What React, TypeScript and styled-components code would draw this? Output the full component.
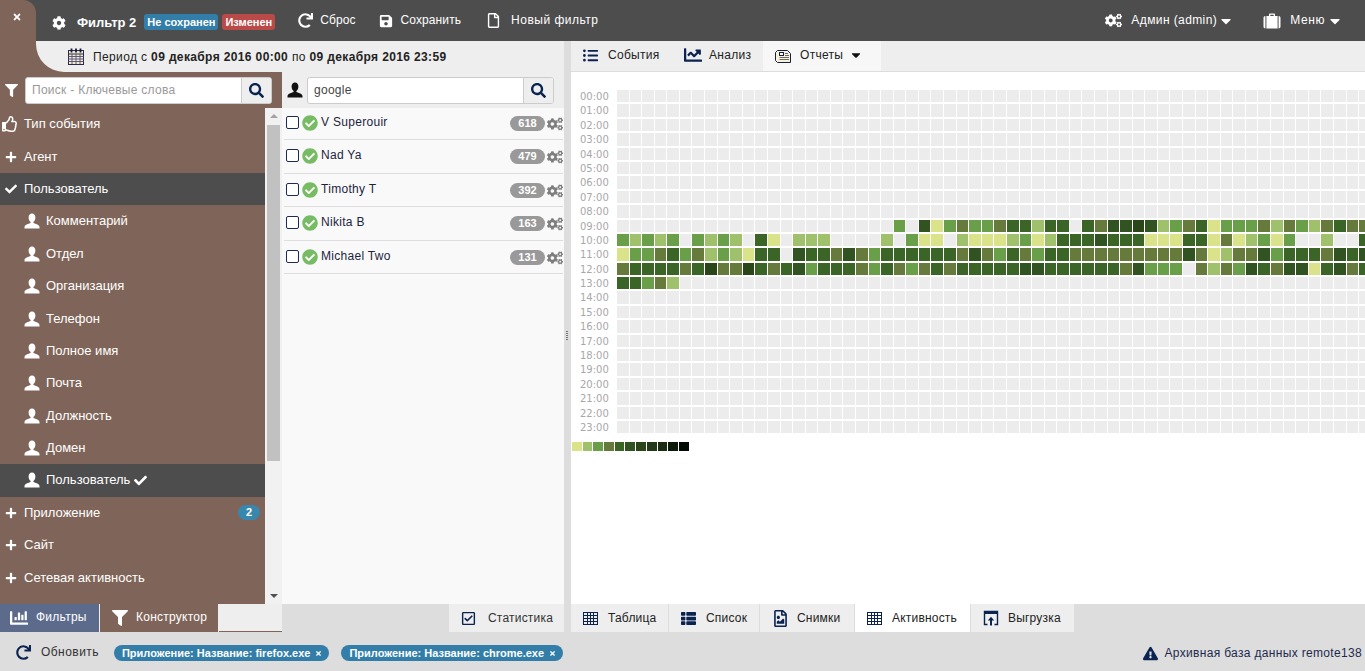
import React from 'react';
import styled, { createGlobalStyle } from 'styled-components';
import {
  FaCog, FaCogs, FaRedo, FaSave, FaRegFile, FaCaretDown, FaTimes, FaFilter, FaSearch,
  FaRegThumbsUp, FaPlus, FaCheck, FaCheckCircle, FaChartBar, FaRegCheckSquare, FaListUl, FaChartLine,
  FaThList, FaRegFileImage, FaExclamationTriangle,
} from 'react-icons/fa';

const BROWN = '#7f6559';
const DARK = '#4d4d4d';
const NAVY = '#0b2350';

const Global = createGlobalStyle`
  html, body { margin: 0; padding: 0; height: 100%; overflow: hidden; }
  body { font-family: "Liberation Sans", Arial, sans-serif; font-size: 12px; color: #333; background: #ddd; }
  * { box-sizing: border-box; }
`;

const Page = styled.div`
  width: 1365px; height: 671px; display: flex; flex-direction: column; overflow: hidden; background: #ddd;
`;

/* ---------- top bar ---------- */
const TopBar = styled.header`
  height: 41px; flex: none; background: ${DARK}; color: #fff; display: flex; align-items: center; padding-right: 22px;
`;
const CloseTab = styled.div`
  width: 36px; height: 41px; flex: none; background: ${BROWN}; border-top-right-radius: 13px;
  display: flex; justify-content: center; padding: 12px 2px 0 0; font-size: 10px;
`;
const TitleCog = styled.span`
  margin-left: 16px; display: flex; font-size: 14px; margin-top: 4px;
`;
const Title = styled.b`
  margin-left: 11px; font-size: 13px; margin-top: 3px; white-space: nowrap;
`;
const Tag = styled.span<{ $bg: string; $ml: number }>`
  margin-left: ${p => p.$ml}px; height: 16px; margin-top: 3px; padding: 0 3px; background: ${p => p.$bg};
  border-radius: 3px; font-size: 11px; font-weight: bold; line-height: 16px; white-space: nowrap;
`;
const BarAction = styled.div<{ $ml: number; $gap: number; $ls?: number }>`
  margin-left: ${p => p.$ml}px; display: flex; align-items: center; gap: ${p => p.$gap}px; white-space: nowrap; font-size: 12px;
  letter-spacing: ${p => p.$ls ?? 0.1}px;
  & > span { margin-top: -1px; }
`;
const BarCaret = styled(FaCaretDown)<{ $ml: number }>`
  font-size: 16px; margin-left: ${p => p.$ml}px;
`;
const BarSpacer = styled.div`flex: 1;`;

/* ---------- body ---------- */
const Body = styled.main`
  height: 563px; flex: none; display: flex;
`;
const LeftCol = styled.section`
  width: 564px; flex: none; display: flex; flex-direction: column; background: #eee;
`;
const PeriodWrap = styled.div`
  height: 31px; flex: none; background: linear-gradient(90deg, ${BROWN} 282px, #eee 282px);
`;
const PeriodBar = styled.div`
  margin-left: 36px; height: 31px; background: #eee; border-bottom-left-radius: 28px;
  display: flex; align-items: center; padding-left: 32px; gap: 9px; color: #222; font-size: 12px; white-space: nowrap; letter-spacing: 0.37px;
`;
const Columns = styled.div`
  flex: 1; min-height: 0; display: grid; grid-template-columns: 282px 282px;
`;
const FilterCol = styled.div`
  background: ${BROWN}; display: flex; flex-direction: column; min-height: 0;
`;
const SearchRow = styled.div<{ $pad: number }>`
  height: 36px; flex: none; display: flex; align-items: center; padding-left: ${p => p.$pad}px;
`;
const SearchIcon = styled.span<{ $w: number; $color: string; $size: number }>`
  width: ${p => p.$w}px; flex: none; display: flex; color: ${p => p.$color}; font-size: ${p => p.$size}px;
`;
const SearchBox = styled.div`
  width: 247px; height: 27px; display: flex; background: #fff; border: 1px solid #ccc; border-radius: 3px; overflow: hidden;
`;
const SearchText = styled.div<{ $muted?: boolean }>`
  flex: 1; line-height: 24px; padding-left: 6px; color: ${p => (p.$muted ? '#999' : '#444')}; font-size: 12px; letter-spacing: 0.28px;
`;
const SearchBtn = styled.div`
  width: 30px; background: #eee; border-left: 1px solid #ccc; display: flex; align-items: center; justify-content: center; color: ${NAVY}; font-size: 15px;
`;
const TreeWrap = styled.div`
  flex: 1; min-height: 0; display: flex;
`;
const Tree = styled.ul`
  width: 265px; margin: 0; padding: 0; list-style: none; color: #fff;
`;
const TreeItem = styled.li<{ $active?: boolean; $sub?: boolean }>`
  height: 32.4px; display: flex; align-items: center; padding-left: ${p => (p.$sub ? '24px' : '5px')};
  background: ${p => (p.$active ? DARK : 'transparent')}; white-space: nowrap; font-size: 13px;
  & > span:nth-child(2) { margin-top: -1px; }
`;
const TreeIcon = styled.span<{ $sub?: boolean; $wide?: boolean }>`
  width: ${p => (p.$sub ? '22px' : '19px')}; display: flex; font-size: ${p => (p.$sub ? '16px' : '12px')};
  ${p => p.$wide && 'font-size: 16px; margin-left: -3px; width: 22px;'}
`;
const TreeBadge = styled.span`
  margin-left: auto; margin-right: 5px; width: 22px; height: 15px; border-radius: 8px; background: #3a87ad; color: #fff;
  font-weight: bold; font-size: 11px; line-height: 15px; text-align: center;
`;
const Scrollbar = styled.div`
  width: 17px; background: #f1f1f1; display: flex; flex-direction: column; align-items: center; justify-content: space-between; position: relative;
`;
const ScrollArrow = styled.span<{ $up?: boolean }>`
  width: 0; height: 0; margin: 6px 0; border-left: 4px solid transparent; border-right: 4px solid transparent;
  ${p => (p.$up ? 'border-bottom: 4px solid #a3a3a3;' : 'border-top: 4px solid #505050;')}
`;
const ScrollThumb = styled.div`
  position: absolute; top: 17px; left: 2px; width: 13px; height: 336px; background: #c1c1c1;
`;

const UserCol = styled.div`
  display: flex; flex-direction: column; min-height: 0; background: #eee;
`;
const UserList = styled.ul`
  flex: 1; margin: 0; padding: 0 1px 0 2px; list-style: none; background: #f9f9f9;
`;
const UserRow = styled.li`
  height: 33.4px; display: flex; align-items: flex-start; padding: 8px 0 0 2px; border-bottom: 1px solid #ddd; color: #1c2440;
  &:first-child { height: 32.4px; padding-top: 7px; }
`;
const Check = styled.span`
  width: 13px; height: 13px; flex: none; border: 1px solid #1c2a55; border-radius: 2px; background: #fff; margin-top: 1px;
`;
const OkIcon = styled.span`
  margin-left: 3px; width: 16px; height: 16px; flex: none; display: flex; color: #77bc65; font-size: 16px;
  background: radial-gradient(circle, #fff 50%, transparent 52%); border-radius: 50%;
`;
const UserName = styled.span`
  margin-left: 3px; font-size: 12px; line-height: 13px; letter-spacing: 0.3px; margin-top: 1px;
`;
const Count = styled.span`
  margin-left: auto; width: 35px; height: 15px; border-radius: 8px; background: #999; color: #fff; font-weight: bold; font-size: 11px;
  line-height: 15px; text-align: center; margin-top: 1px;
`;
const RowCogs = styled.span`
  margin-left: 2px; width: 16px; display: flex; color: #7e7e7e; font-size: 16px; margin-top: 1px;
`;

const Splitter = styled.div`
  width: 7px; flex: none; background: #ddd; display: flex; flex-direction: column; align-items: center; justify-content: center; gap: 1px;
  padding: 26px 1px 0 0;
`;
const GripDot = styled.i`
  width: 2px; height: 1px; background: #777; display: block;
`;

const RightPane = styled.section`
  flex: 1; min-width: 0; display: flex; flex-direction: column; background: #fff; overflow: hidden;
`;
const ViewTabs = styled.nav`
  height: 31px; flex: none; background: #eee; border-bottom: 1px solid #ddd; display: flex;
`;
const ViewTab = styled.div<{ $w: number; $gap: number; $active?: boolean }>`
  width: ${p => p.$w}px; display: flex; align-items: center; padding-left: 12px; gap: ${p => p.$gap}px; white-space: nowrap; color: #222; letter-spacing: 0.3px;
  background: ${p => (p.$active ? '#f7f7f7' : 'transparent')};
  & > span { margin-top: -2px; }
`;
const TabGlyph = styled.span<{ $size?: number }>`
  display: flex; color: ${NAVY}; font-size: ${p => p.$size ?? 15}px;
`;
const CaretGlyph = styled.span`
  display: flex; color: #111; font-size: 14px; margin-left: -3px;
`;
const Heat = styled.div`
  padding-top: 18px; width: 794px; overflow: hidden;
`;
const HeatRow = styled.div`
  display: grid; grid-template-columns: 45px repeat(60, 11.58px); column-gap: 1px; height: 14.4px; width: 900px;
`;
const HourLabel = styled.span`
  font-family: "DejaVu Sans", sans-serif; font-size: 10px; line-height: 13px; color: #a8a8a8; padding-left: 9px; margin-right: -4px; white-space: nowrap;
`;
const HeatCell = styled.i<{ $c: string }>`
  display: block; height: 12.4px; background: ${p => p.$c};
`;
const Legend = styled.div`
  display: flex; gap: 1px; padding: 7px 0 0 1px;
`;
const LegendCell = styled.i<{ $c: string }>`
  display: block; width: 9.7px; height: 9px; background: ${p => p.$c};
`;

/* ---------- tab strips ---------- */
const TabStrip = styled.div`
  height: 28px; flex: none; display: flex; background: #ddd; white-space: nowrap;
`;
const LeftTabs = styled.div`
  width: 282px; flex: none; display: flex; background: #eee; border-bottom: 1px solid ${BROWN};
`;
const LeftTab = styled.div<{ $bg: string; $w: number; $gap: number; $pl: number; $icon: number }>`
  width: ${p => p.$w}px; background: ${p => p.$bg}; color: #fff; display: flex; align-items: center; padding-left: ${p => p.$pl}px; gap: ${p => p.$gap}px;
  margin-bottom: -1px; border-right: 1px solid #eee; font-size: 12px; letter-spacing: 0.25px;
  & > span:last-child { margin-top: -2px; }
  & > svg { font-size: ${p => p.$icon}px; }
`;
const StatZone = styled.div`
  width: 282px; flex: none; display: flex; justify-content: flex-end; background: #ddd;
`;
const StatTab = styled.div`
  width: 115px; background: #eee; display: flex; align-items: center; padding-left: 12px; gap: 12px; letter-spacing: 0.2px;
  & > span:last-child { margin-top: -1px; }
`;
const ViewStrip = styled.div`
  margin-left: 7px; display: flex; gap: 1px;
`;
const BottomTab = styled.div<{ $w: number; $gap?: number; $active?: boolean }>`
  width: ${p => p.$w}px; background: ${p => (p.$active ? '#fff' : '#eee')}; display: flex; align-items: center; padding-left: 12px; gap: ${p => p.$gap ?? 10}px; color: #222; letter-spacing: 0.2px;
  & > span:last-child { margin-top: -1px; }
`;

/* ---------- status bar ---------- */
const StatusBar = styled.footer`
  height: 39px; flex: none; display: flex; align-items: center; padding: 3px 3px 0 16px; background: #ddd; color: #333; white-space: nowrap;
`;
const Refresh = styled.div`
  display: flex; align-items: center; gap: 10px; margin-right: 15px; letter-spacing: 0.45px;
  & > svg { color: ${NAVY}; font-size: 15px; margin-top: -2px; } & > span { margin-top: -2px; }
`;
const Chip = styled.span`
  height: 16px; display: flex; align-items: center; gap: 5px; margin-right: 12px; padding: 0 7px 0 8px; border-radius: 8px; background: #337ea9; color: #fff;
  font-size: 11px; font-weight: bold;
  & > svg { font-size: 7px; }
`;
const Warning = styled.div`
  margin-left: auto; display: flex; align-items: center; gap: 6px; color: #1c2a50; letter-spacing: 0.33px;
  & > svg { color: ${NAVY}; font-size: 15px; }
`;

/* ---------- drawn icons ---------- */
const UserGlyph = () => (
  <svg width="1em" height="1em" viewBox="0 0 16 16" fill="currentColor">
    <path d="M8 0.5C5.8 0.5 4.6 2.2 4.6 4.5c0 2 .8 3.6 2 4.4v1.2C5 11 1 11.4 0.5 14v1.5h15V14c-.5-2.6-4.5-3-6.1-3.9V8.9c1.2-.8 2-2.4 2-4.4C11.4 2.2 10.2 0.5 8 0.5z" />
  </svg>
);
const BriefcaseGlyph = () => (
  <svg width="18" height="16" viewBox="0 0 18 16" fill="#fff">
    <path d="M6 3V1.5C6 .8 6.6.5 7 .5h4c.5 0 1 .3 1 1V3h-1.3V1.8H7.3V3z" />
    <rect x="3.4" y="3" width="11.2" height="12.5" />
    <path d="M0.5 5C.5 3.8 1.2 3 2.4 3v12.5C1.2 15.5.5 14.7.5 13.5zM15.6 3c1.2 0 1.9.8 1.9 2v8.5c0 1.2-.7 2-1.9 2z" />
  </svg>
);
const GridIcon = () => (
  <svg width="15" height="13" viewBox="0 0 15 13" fill="none" stroke={NAVY}>
    <rect x="0.5" y="0.5" width="14" height="12" />
    <path d="M0 3.5H15M0 6.5H15M0 9.5H15M4.5 1V13M7.5 1V13M10.5 1V13" />
  </svg>
);
const CalendarIcon = () => (
  <svg width="16" height="17" viewBox="0 0 16 17" fill="none" stroke="#2b2a44">
    <rect x="0.5" y="2.5" width="15" height="14" fill="#f3ead6" />
    <path d="M0.5 6H15.5" />
    <path d="M0.5 8.5H15.5M0.5 11H15.5M0.5 13.5H15.5M4 6V16M8 6V16M12 6V16" stroke="#5c5a78" />
    <path d="M3.5 0.5V4.5M8 0.5V4.5M12.5 0.5V4.5" strokeWidth="1.8" stroke="#101c40" />
  </svg>
);
const ReportIcon = () => (
  <svg width="16" height="15" viewBox="0 0 16 15" fill="none" stroke="#1a1f3a">
    <path d="M2.5 1.5H12.5L15.5 4.5V13.5H2.5L0.5 11.5V3.5Z" fill="#f5f1dc" />
    <rect x="4.5" y="3.5" width="4" height="3" fill="#fff" />
    <path d="M10 4.5H13M10 6.5H14M4.5 8.5H14M4.5 10.5H14" stroke="#6a6a6a" />
  </svg>
);
const ExportIcon = () => (
  <svg width="16" height="16" viewBox="0 0 16 16" fill="none" stroke={NAVY}>
    <path d="M4.5 14.5H1.5V1.5H14.5V14.5H11.5" strokeWidth="1.4" />
    <rect x="1" y="1" width="14" height="3" fill={NAVY} stroke="none" />
    <path d="M8 15.5V8.5" strokeWidth="2" />
    <path d="M4.8 10.5L8 6.8L11.2 10.5Z" fill={NAVY} stroke="none" />
  </svg>
);

/* ---------- data ---------- */
const PALETTE = ['#ececec', '#dbe38a', '#a0c16c', '#699f49', '#657a3b', '#3b6527', '#315322', '#2a4619'];
const LEGEND = ['#dbe38a', '#a0c16c', '#699f49', '#657a3b', '#3b6527', '#315322', '#2a4619', '#24381a', '#1c2c12', '#0b1a09', '#030a03'];
const DATA: Record<number, string> = {
  9: '0000000000000000000000306134' + '33455255054667623451333424324544',
  10: '3232303232051022200002031102' + '11123125556555111551412313002005',
  11: '1334534232155065546435555554' + '64354355444444444641244635554656',
  12: '4555545744754563555435434545' + '55556655555546333042436546615645',
  13: '55342',
};
const hours = Array.from({ length: 24 }, (_, i) => i);
const cellColor = (h: number, c: number) => {
  const ch = DATA[h]?.[c];
  return PALETTE[ch ? Number(ch) : 0];
};

type Filter = { label: string; sub?: boolean; active?: boolean; wide?: boolean; icon: React.ReactNode; mark?: boolean; badge?: string };
const filters: Filter[] = [
  { label: 'Тип события', icon: <FaRegThumbsUp />, wide: true },
  { label: 'Агент', icon: <FaPlus /> },
  { label: 'Пользователь', icon: <FaCheck />, active: true },
  ...['Комментарий', 'Отдел', 'Организация', 'Телефон', 'Полное имя', 'Почта', 'Должность', 'Домен'].map(label => ({ label, sub: true, icon: <UserGlyph /> })),
  { label: 'Пользователь', sub: true, active: true, icon: <UserGlyph />, mark: true },
  { label: 'Приложение', icon: <FaPlus />, badge: '2' },
  { label: 'Сайт', icon: <FaPlus /> },
  { label: 'Сетевая активность', icon: <FaPlus /> },
];
const users = [['V Superouir', '618'], ['Nad Ya', '479'], ['Timothy T', '392'], ['Nikita B', '163'], ['Michael Two', '131']];

export default function App() {
  return (
    <Page>
      <Global />
      <TopBar>
        <CloseTab><FaTimes /></CloseTab>
        <TitleCog><FaCog /></TitleCog>
        <Title>Фильтр 2</Title>
        <Tag $bg="#337ea9" $ml={8}>Не сохранен</Tag>
        <Tag $bg="#b94a48" $ml={4}>Изменен</Tag>
        <BarAction $ml={23} $gap={7}><FaRedo size={15} /><span>Сброс</span></BarAction>
        <BarAction $ml={23} $gap={8}><FaSave size={14} /><span>Сохранить</span></BarAction>
        <BarAction $ml={25} $gap={10} $ls={0.5}><FaRegFile size={15} /><span>Новый фильтр</span></BarAction>
        <BarSpacer />
        <BarAction $ml={0} $gap={9} $ls={0.4}><FaCogs size={17} /><span>Админ (admin)</span><BarCaret $ml={-8} /></BarAction>
        <BarAction $ml={29} $gap={9} $ls={0.6}><BriefcaseGlyph /><span>Меню</span><BarCaret $ml={-7} /></BarAction>
      </TopBar>
      <Body>
        <LeftCol>
          <PeriodWrap>
            <PeriodBar>
              <CalendarIcon />
              <span>Период с <b>09 декабря 2016 00:00</b> по <b>09 декабря 2016 23:59</b></span>
            </PeriodBar>
          </PeriodWrap>
          <Columns>
            <FilterCol>
              <SearchRow $pad={5}>
                <SearchIcon $w={20} $color="#fff" $size={13}><FaFilter /></SearchIcon>
                <SearchBox><SearchText $muted>Поиск - Ключевые слова</SearchText><SearchBtn><FaSearch /></SearchBtn></SearchBox>
              </SearchRow>
              <TreeWrap>
                <Tree>
                  {filters.map((f, i) => (
                    <TreeItem key={i} $active={f.active} $sub={f.sub}>
                      <TreeIcon $sub={f.sub} $wide={f.wide}>{f.icon}</TreeIcon>
                      <span>{f.label}</span>
                      {f.mark && <FaCheck size={13} style={{ marginLeft: 4 }} />}
                      {f.badge && <TreeBadge>{f.badge}</TreeBadge>}
                    </TreeItem>
                  ))}
                </Tree>
                <Scrollbar>
                  <ScrollArrow $up />
                  <ScrollThumb />
                  <ScrollArrow />
                </Scrollbar>
              </TreeWrap>
            </FilterCol>
            <UserCol>
              <SearchRow $pad={5}>
                <SearchIcon $w={20} $color="#111" $size={16}><UserGlyph /></SearchIcon>
                <SearchBox><SearchText>google</SearchText><SearchBtn><FaSearch /></SearchBtn></SearchBox>
              </SearchRow>
              <UserList>
                {users.map(([n, c]) => (
                  <UserRow key={n}>
                    <Check />
                    <OkIcon><FaCheckCircle /></OkIcon>
                    <UserName>{n}</UserName>
                    <Count>{c}</Count>
                    <RowCogs><FaCogs /></RowCogs>
                  </UserRow>
                ))}
              </UserList>
            </UserCol>
          </Columns>
        </LeftCol>
        <Splitter>{[0, 1, 2, 3, 4].map(i => <GripDot key={i} />)}</Splitter>
        <RightPane>
          <ViewTabs>
            <ViewTab $w={101} $gap={10}><TabGlyph><FaListUl /></TabGlyph><span>События</span></ViewTab>
            <ViewTab $w={91} $gap={7}><TabGlyph $size={18}><FaChartLine /></TabGlyph><span>Анализ</span></ViewTab>
            <ViewTab $w={118} $gap={9} $active><ReportIcon /><span>Отчеты</span><CaretGlyph><FaCaretDown /></CaretGlyph></ViewTab>
          </ViewTabs>
          <Heat>
            {hours.map(h => (
              <HeatRow key={h}>
                <HourLabel>{String(h).padStart(2, '0')}:00</HourLabel>
                {Array.from({ length: 60 }, (_, c) => <HeatCell key={c} $c={cellColor(h, c)} />)}
              </HeatRow>
            ))}
            <Legend>{LEGEND.map(c => <LegendCell key={c} $c={c} />)}</Legend>
          </Heat>
        </RightPane>
      </Body>
      <TabStrip>
        <LeftTabs>
          <LeftTab $bg="#5c6b8c" $w={100} $gap={8} $pl={10} $icon={18}><FaChartBar /><span>Фильтры</span></LeftTab>
          <LeftTab $bg={BROWN} $w={119} $gap={8} $pl={12} $icon={16}><FaFilter /><span>Конструктор</span></LeftTab>
        </LeftTabs>
        <StatZone>
          <StatTab><TabGlyph><FaRegCheckSquare /></TabGlyph><span>Статистика</span></StatTab>
        </StatZone>
        <ViewStrip>
          <BottomTab $w={97}><GridIcon /><span>Таблица</span></BottomTab>
          <BottomTab $w={90}><TabGlyph><FaThList /></TabGlyph><span>Список</span></BottomTab>
          <BottomTab $w={94} $gap={8}><TabGlyph $size={17}><FaRegFileImage /></TabGlyph><span>Снимки</span></BottomTab>
          <BottomTab $w={115} $active><GridIcon /><span>Активность</span></BottomTab>
          <BottomTab $w={103} $gap={9}><ExportIcon /><span>Выгрузка</span></BottomTab>
        </ViewStrip>
      </TabStrip>
      <StatusBar>
        <Refresh><FaRedo /><span>Обновить</span></Refresh>
        <Chip>Приложение: Название: firefox.exe <FaTimes /></Chip>
        <Chip>Приложение: Название: chrome.exe <FaTimes /></Chip>
        <Warning><FaExclamationTriangle /><span>Архивная база данных remote138</span></Warning>
      </StatusBar>
    </Page>
  );
}
